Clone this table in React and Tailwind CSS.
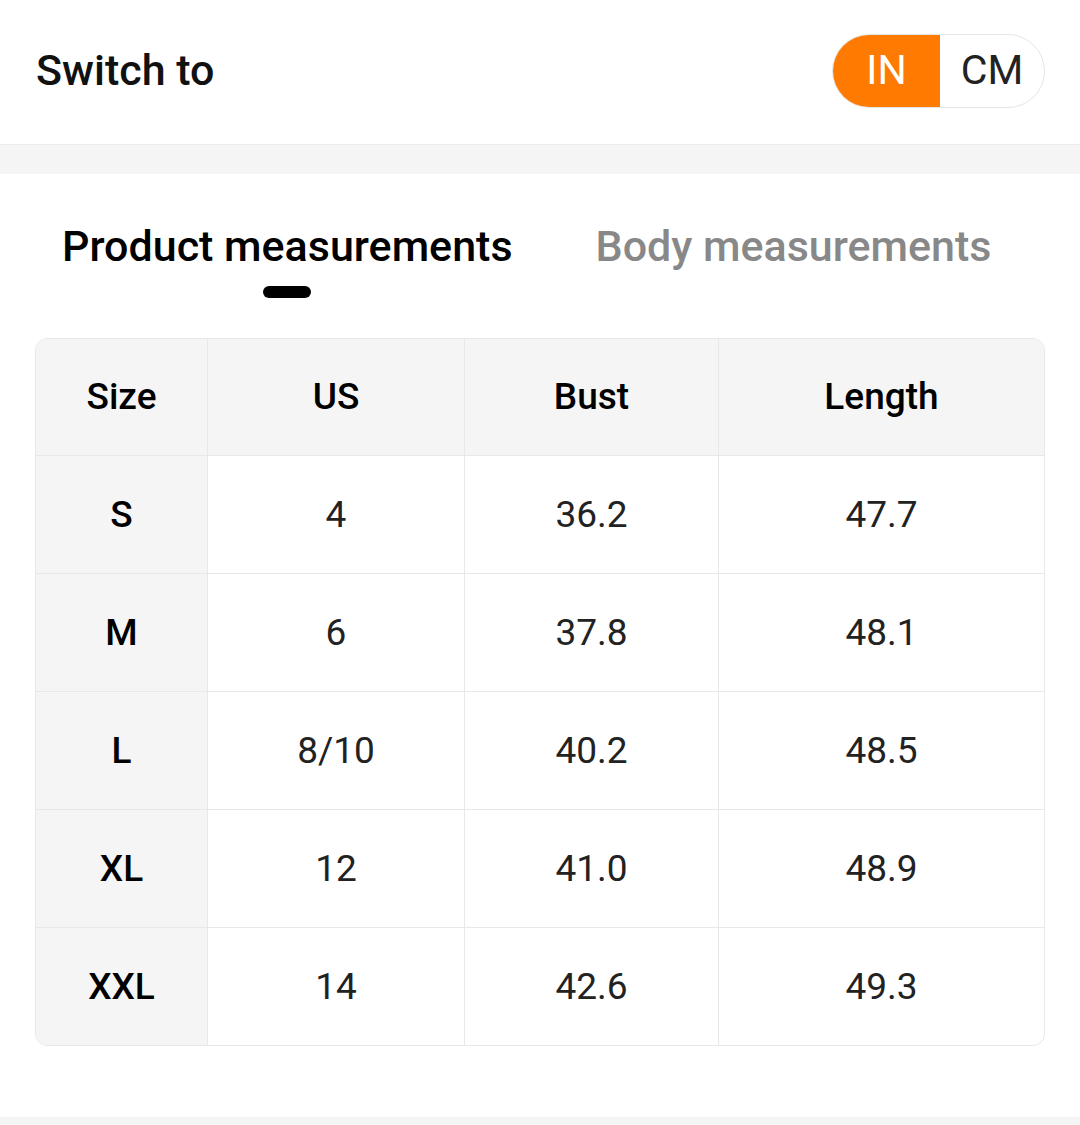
export default function App() {
  const rows = [
    ["S", "4", "36.2", "47.7"],
    ["M", "6", "37.8", "48.1"],
    ["L", "8/10", "40.2", "48.5"],
    ["XL", "12", "41.0", "48.9"],
    ["XXL", "14", "42.6", "49.3"],
  ];
  const cols = "grid grid-cols-[171px_257px_254px_1fr]";
  return (
    <div className="w-[1080px] h-[1125px] bg-white overflow-hidden text-black" style={{ fontFamily: "Roboto, 'Noto Sans', sans-serif" }}>
      <div className="h-[144px] flex items-center justify-between pl-[36px] pr-[35px]">
        <span className="text-[43px] font-medium text-[#111] -mt-[4px]">Switch to</span>
        <div className="flex h-[74px] w-[213px] rounded-full border border-[#e6e6e6] overflow-hidden -mt-[2px]">
          <div className="w-[107px] bg-[#ff7a00] text-white flex items-center justify-center text-[41px]">IN</div>
          <div className="flex-1 flex items-center justify-center text-[41px] text-[#222]">CM</div>
        </div>
      </div>
      <div className="h-[30px] bg-[#f5f5f5] border-t border-[#ededed]"></div>
      <div className="flex pt-[48px] pl-[62px] gap-[83px]">
        <div className="flex flex-col items-center">
          <span className="text-[43px] font-medium leading-[48px]">Product measurements</span>
          <div className="mt-[16px] w-[48px] h-[12px] rounded-full bg-black"></div>
        </div>
        <span className="text-[43px] font-medium leading-[48px] text-[#888]">Body measurements</span>
      </div>
      <div className="mt-[40px] mx-[35px] border border-[#e8e8e8] rounded-[12px] overflow-hidden text-[37px]">
        <div className={`${cols} h-[116px] bg-[#f5f5f5] font-medium`}>
          {["Size", "US", "Bust", "Length"].map((h, i) => (
            <div key={h} className={`flex items-center justify-center ${i > 0 ? "border-l border-[#e8e8e8]" : ""}`}>{h}</div>
          ))}
        </div>
        {rows.map((r) => (
          <div key={r[0]} className={`${cols} h-[118px] border-t border-[#e8e8e8]`}>
            {r.map((c, i) => (
              <div key={i} className={`flex items-center justify-center ${i === 0 ? "bg-[#f5f5f5] font-medium" : "border-l border-[#e8e8e8] text-[#222]"}`}>{c}</div>
            ))}
          </div>
        ))}
      </div>
      <div className="mt-[71px] h-[10px] bg-[#f5f5f5]"></div>
    </div>
  );
}
